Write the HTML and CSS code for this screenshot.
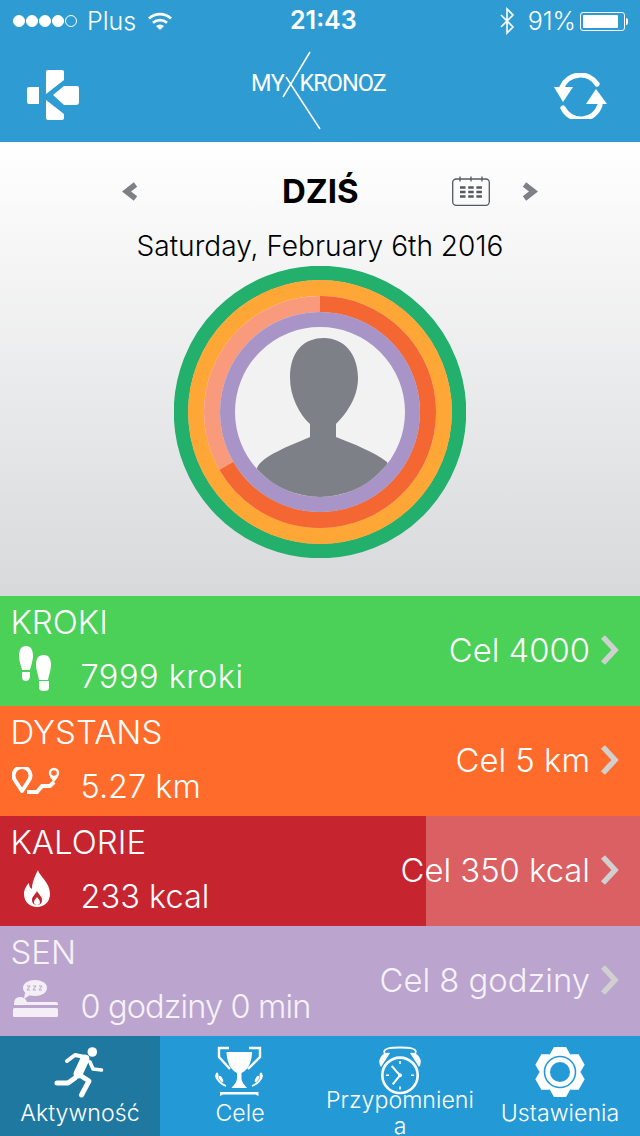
FILE: index.html
```html
<!DOCTYPE html>
<html lang="pl">
<head>
<meta charset="utf-8">
<title>MyKronoz</title>
<link rel="stylesheet" href="styles.css">
</head>
<body>
<div class="app">
  <header class="top">
    <div class="status">
      <div class="status-left">
        <span class="dots"><i class="dot"></i><i class="dot"></i><i class="dot"></i><i class="dot"></i><i class="dot dot-empty"></i></span>
        <span class="carrier">Plus</span>
        <svg class="wifi" viewBox="0 0 24 18"><path d="M1 6.500a16 16 0 0 1 22 0" fill="none" stroke="#fff" stroke-width="2.800"/><path d="M5 10.800a10.500 10.500 0 0 1 14 0" fill="none" stroke="#fff" stroke-width="2.800"/><path d="M8 14a6 6 0 0 1 8 0l-4 4z" fill="#fff"/></svg>
      </div>
      <div class="clock">21:43</div>
      <div class="status-right">
        <svg class="bt" viewBox="0 0 16 28"><path d="M2 8l12 12-6 6V2l6 6L2 20" fill="none" stroke="#fff" stroke-width="1.600"/></svg>
        <span class="pct">91%</span>
        <span class="battery"><span class="battery-body"><span class="battery-fill"></span></span><span class="battery-nub"></span></span>
      </div>
    </div>
    <div class="nav">
      <svg class="kicon" viewBox="0 0 52 50"><path d="M0 19q0-2 2-2h10v17H2q-2 0-2-2z" fill="#fff"/><path d="M19 2q0-2 2-2h14q2 0 2 2v8L19 24z" fill="#fff"/><path d="M26 25l11-9h13q2 0 2 2v14q0 3-3 3H37z" fill="#fff"/><path d="M19 30l18 14v4q0 2-3 2H21q-2 0-2-2z" fill="#fff"/></svg>
      <div class="logo">
        <span class="logo-my">MY</span><span class="logo-kronoz">KRONOZ</span>
        <svg class="logo-x" viewBox="0 0 60 80"><path d="M39 1L12 46M15 26L49 78" fill="none" stroke="#fff" stroke-width="1.500"/></svg>
      </div>
      <svg class="sync" viewBox="0 0 54 46"><path d="M9 14A20 20 0 0 1 44 11" fill="none" stroke="#fff" stroke-width="5.200" stroke-linecap="round"/><path d="M47 32A20 20 0 0 1 10 35" fill="none" stroke="#fff" stroke-width="5.200" stroke-linecap="round"/><path d="M1 14h19L10 29z" fill="#fff"/><path d="M33 31h21L43 16z" fill="#fff"/></svg>
    </div>
  </header>

  <section class="today">
    <div class="day-nav">
      <svg class="chev" viewBox="0 0 16 19"><path d="M13.500 2.500L4.500 9.500 13.500 16.500" fill="none" stroke="#7e8085" stroke-width="5.500"/></svg>
      <h1 class="day-title">DZIŚ</h1>
      <svg class="cal" viewBox="0 0 38 30"><rect x=".7" y="3" width="36.600" height="26.300" rx="3.500" fill="none" stroke="#55585e" stroke-width="1.300"/><path d="M8 .5v5M19 .5v5M30 .5v5" stroke="#55585e" stroke-width="1.300"/><path d="M8 11.500h22M8 16h22M8 20.500h22" stroke="#55585e" stroke-width="2.600" stroke-dasharray="5.500 2.700"/></svg>
      <svg class="chev" viewBox="0 0 16 19"><path d="M2.500 2.500l9 7-9 7" fill="none" stroke="#7e8085" stroke-width="5.500"/></svg>
    </div>
    <p class="date">Saturday, February 6th 2016</p>
    <svg class="rings" viewBox="0 0 292 292">
      <defs><clipPath id="face"><circle cx="146" cy="146" r="85"/></clipPath></defs>
      <circle cx="146" cy="146" r="139" fill="none" stroke="#23af6c" stroke-width="14.500"/>
      <circle cx="146" cy="146" r="124" fill="none" stroke="#ffa736" stroke-width="16"/>
      <circle cx="146" cy="146" r="108" fill="none" stroke="#f99a7c" stroke-width="16"/>
      <circle cx="146" cy="146" r="108" fill="none" stroke="#f46632" stroke-width="16" pathLength="360" stroke-dasharray="240 120" transform="rotate(-90 146 146)"/>
      <circle cx="146" cy="146" r="92.500" fill="#f2f2f3" stroke="#a894c6" stroke-width="15"/>
      <g clip-path="url(#face)">
        <path d="M150 72C170 72 184 88 184 112 184 132 172 148 162 158V171C180 178 200 186 213 196L240 260H60L83 202C88 190 115 180 136 171V158C125 148 116 130 116 112 116 85 130 72 150 72Z" fill="#7e8087"/>
      </g>
    </svg>
  </section>

  <section class="stats">
    <div class="stat stat-steps">
      <div class="stat-fill" style="width:100%"></div>
      <div class="stat-main">
        <div class="stat-name">KROKI</div>
        <div class="stat-value">
          <svg class="stat-icon" viewBox="0 0 32 46"><g fill="#fff"><path d="M7 0c5 0 7 4 7 10 0 5-2 9-3 14H3C2 19 0 15 0 10 0 4 2 0 7 0z"/><path d="M3 26h8v5q-1 4-4 4-4 0-4-4z"/><path d="M25 9c-6 0-8 4-8 10 0 5 2 9 3 15h9c1-6 3-10 3-15 0-6-2-10-7-10z"/><path d="M20 35h10v7q0 3-5 3t-5-3z"/></g></svg>
          <span>7999 kroki</span>
        </div>
      </div>
      <div class="stat-goal"><span>Cel 4000</span><svg class="arrow" viewBox="0 0 20 32"><path d="M3 3l12 13L3 29" fill="none" stroke="currentColor" stroke-width="5.500"/></svg></div>
    </div>
    <div class="stat stat-distance">
      <div class="stat-fill" style="width:100%"></div>
      <div class="stat-main">
        <div class="stat-name">DYSTANS</div>
        <div class="stat-value">
          <svg class="stat-icon" viewBox="0 0 48 28"><g fill="none" stroke="#fff"><path d="M10 24L3.500 14a8.500 8.500 0 1 1 13 0z" stroke-width="4" stroke-linejoin="round"/><path d="M15 25h10l5-6h8l4-4" stroke-width="4"/><circle cx="42" cy="6" r="4" stroke-width="2.400"/><path d="M42 15l-4-5h8z" fill="#fff" stroke="none"/></g></svg>
          <span>5.27 km</span>
        </div>
      </div>
      <div class="stat-goal"><span>Cel 5 km</span><svg class="arrow" viewBox="0 0 20 32"><path d="M3 3l12 13L3 29" fill="none" stroke="currentColor" stroke-width="5.500"/></svg></div>
    </div>
    <div class="stat stat-calories">
      <div class="stat-fill" style="width:66.6%"></div>
      <div class="stat-main">
        <div class="stat-name">KALORIE</div>
        <div class="stat-value">
          <svg class="stat-icon" viewBox="0 0 28 38"><path fill-rule="evenodd" d="M15 0c1 6 12 12 12 24 0 8-6 13-13 13S1 32 1 24c0-5 3-9 5-11 0 3 1 5 3 6 0-7 3-13 6-19zM14 21c-1 3-5 5-5 9 0 3 2 5 5 5s5-2 5-5c0-4-4-6-5-9z" fill="#fff"/><path d="M14 27c-1 2-3 3-3 5s1 3 3 3 3-1 3-3-2-3-3-5z" fill="#fff"/></svg>
          <span>233 kcal</span>
        </div>
      </div>
      <div class="stat-goal"><span>Cel 350 kcal</span><svg class="arrow" viewBox="0 0 20 32"><path d="M3 3l12 13L3 29" fill="none" stroke="currentColor" stroke-width="5.500"/></svg></div>
    </div>
    <div class="stat stat-sleep">
      <div class="stat-fill" style="width:0%"></div>
      <div class="stat-main">
        <div class="stat-name">SEN</div>
        <div class="stat-value">
          <svg class="stat-icon" viewBox="0 0 46 38"><ellipse cx="23" cy="8" rx="12" ry="8" fill="#f4eff7"/><path d="M13 13l-1 6 6-4z" fill="#f4eff7"/><path d="M2 24q0-7 6-7 5 0 7 5h29q2 0 2 2v1H2z" fill="#f4eff7"/><rect x="1" y="28" width="45" height="9" rx="1.500" fill="#f4eff7"/><path d="M15 6h3l-3 4h3M21 6h3l-3 4h3M27 6h3l-3 4h3" fill="none" stroke="#bba5cf" stroke-width="1"/></svg>
          <span>0 godziny 0 min</span>
        </div>
      </div>
      <div class="stat-goal"><span>Cel 8 godziny</span><svg class="arrow" viewBox="0 0 20 32"><path d="M3 3l12 13L3 29" fill="none" stroke="currentColor" stroke-width="5.500"/></svg></div>
    </div>
  </section>

  <nav class="tabs">
    <div class="tab tab-active">
      <div class="tab-icon">
        <svg viewBox="0 0 56 56" class="tab-svg"><circle cx="40.300" cy="12" r="4.800" fill="#fff"/><g fill="none" stroke="#fff" stroke-linecap="round" stroke-linejoin="round"><path d="M15 21l8-6 12 2.500" stroke-width="4"/><path d="M33 19L26 34" stroke-width="9"/><path d="M38 22l3 7 8.500 1" stroke-width="3.600"/><path d="M26 34l11 7-7.500 14" stroke-width="5"/><path d="M23 38l-7 5H5" stroke-width="5"/></g></svg>
      </div>
      <div class="tab-label">Aktywność</div>
    </div>
    <div class="tab">
      <div class="tab-icon">
        <svg viewBox="0 0 56 56" class="tab-svg"><g fill="none" stroke="#fff" stroke-width="2.400"><path d="M17 8H7v9l11 12"/><path d="M37 8h11v9L36 29"/></g><path d="M14.500 12H40c0 8-3 18-10.500 21v5c0 4 3 7 5.500 10H19.500c2.500-3 5.500-6 5.500-10v-5C18 30 14.500 20 14.500 12z" fill="#fff"/><g fill="none" stroke="#fff" stroke-width="1.800"><path d="M4 35c1 5 5 9 10 11"/><path d="M50 35c-1 5-5 9-10 11"/></g><g fill="#fff"><ellipse cx="5" cy="36" rx="1.500" ry="3.500"/><ellipse cx="9" cy="39" rx="1.500" ry="3.500" transform="rotate(-30 9 39)"/><ellipse cx="49" cy="36" rx="1.500" ry="3.500"/><ellipse cx="45" cy="39" rx="1.500" ry="3.500" transform="rotate(30 45 39)"/></g><path d="M8 52h38.500v4l-3-1.500H11L8 56z" fill="#fff"/></svg>
      </div>
      <div class="tab-label">Cele</div>
    </div>
    <div class="tab">
      <div class="tab-icon">
        <svg viewBox="0 0 56 56" class="tab-svg"><circle cx="28" cy="35.300" r="17.700" fill="none" stroke="#fff" stroke-width="2.600"/><path d="M9 27a9 9 0 0 1 9-14zM47 27a9 9 0 0 0-9-14z" fill="#fff"/><path d="M13 14C9 8 20 7.500 28 7.500S47 8 43 14" fill="none" stroke="#fff" stroke-width="1.800"/><path d="M28 35.300L19.700 26M28 35.300l-7.300 9" fill="none" stroke="#fff" stroke-width="2"/><path d="M28 21v3M28 46.500v3M14 35.300h3M39 35.300h3" stroke="#fff" stroke-width="1.600"/><circle cx="28" cy="35.300" r="2" fill="#fff"/></svg>
      </div>
      <div class="tab-label">Przypomnienia</div>
    </div>
    <div class="tab">
      <div class="tab-icon">
        <svg viewBox="0 0 56 56" class="tab-svg"><circle cx="28" cy="32" r="20.500" fill="#fff"/><g fill="#fff"><path d="M18 14l4-7h12l4 7z"/><path d="M18 14l4-7h12l4 7z" transform="rotate(60 28 32)"/><path d="M18 14l4-7h12l4 7z" transform="rotate(120 28 32)"/><path d="M18 14l4-7h12l4 7z" transform="rotate(180 28 32)"/><path d="M18 14l4-7h12l4 7z" transform="rotate(240 28 32)"/><path d="M18 14l4-7h12l4 7z" transform="rotate(300 28 32)"/></g><circle cx="28" cy="32" r="15.500" fill="none" stroke="#2399d5" stroke-width="1.600"/><circle cx="28" cy="32" r="10" fill="#2399d5"/></svg>
      </div>
      <div class="tab-label">Ustawienia</div>
    </div>
  </nav>
</div>
</body>
</html>
```
FILE: styles.css
```css
* { box-sizing: border-box; }
html, body { margin: 0; padding: 0; }
body { width: 640px; height: 1136px; overflow: hidden; font-family: Inter, "Liberation Sans", sans-serif; color: #fff; }
.app { width: 640px; height: 1136px; display: flex; flex-direction: column; overflow: hidden; }

.top { height: 142px; background: #2e9cd3; display: flex; flex-direction: column; }
.status { height: 40px; padding: 2px 12px 0 13px; display: flex; align-items: center; justify-content: space-between; font-size: 25px; position: relative; }
.status-left, .status-right { display: flex; align-items: center; }
.dots { display: flex; gap: 1px; }
.dot { width: 12px; height: 12px; border-radius: 50%; background: #fff; border: 1px solid #fff; display: block; }
.dot-empty { background: transparent; }
.carrier { margin-left: 10px; font-weight: 300; }
.wifi { width: 24px; height: 18px; margin-left: 12px; }
.clock { font-weight: 600; position: absolute; left: 290px; top: 5px; }
.bt { width: 16px; height: 28px; }
.pct { margin-left: 13px; font-weight: 300; }
.battery { display: flex; align-items: center; margin-left: 4px; }
.battery-body { width: 45px; height: 19px; border: 1px solid #fff; border-radius: 3px; padding: 2px; display: block; }
.battery-fill { display: block; height: 100%; width: 91%; background: #fff; border-radius: 1px; }
.battery-nub { width: 2px; height: 7px; background: #fff; margin-left: 1px; border-radius: 0 2px 2px 0; }

.nav { flex: 1; padding: 0 33px 0 27px; display: flex; align-items: center; justify-content: space-between; position: relative; }
.kicon { width: 52px; height: 50px; margin-top: 7px; }
.logo { position: absolute; left: 251px; top: 31px; font-family: Roboto, sans-serif; font-weight: 400; font-size: 23.5px; line-height: 24px; display: flex; gap: 15px; letter-spacing: -0.4px; }
.logo-kronoz { letter-spacing: -1px; }
.logo-x { position: absolute; left: 20px; top: -20px; width: 60px; height: 80px; }
.sync { width: 54px; height: 46px; margin-top: 9px; }

.today { height: 454px; background: linear-gradient(#ffffff, #d8d9db); display: flex; flex-direction: column; align-items: center; }
.day-nav { width: 416px; height: 48px; margin: 25px 0 0 20px; display: flex; align-items: center; position: relative; color: #000; }
.chev { width: 16px; height: 19px; }
.day-title { margin: 0; font-size: 33px; font-weight: 700; position: absolute; left: 160px; top: 0; line-height: 48px; }
.cal { width: 38px; height: 30px; margin-left: auto; margin-right: 32px; }
.date { margin: 13px 0 0; font-size: 28.1px; line-height: 36px; color: #000; font-weight: 350; }
.rings { width: 292px; height: 292px; margin-top: 2px; display: block; }

.stats { display: flex; flex-direction: column; }
.stat { height: 110px; position: relative; display: flex; justify-content: space-between; font-weight: 350; }
.stat-fill { position: absolute; left: 0; top: 0; bottom: 0; }
.stat-steps { background: #4bd058; } .stat-steps .stat-fill { background: #4bd058; }
.stat-distance { background: #ff6b2b; } .stat-distance .stat-fill { background: #ff6b2b; }
.stat-calories { background: #da6063; } .stat-calories .stat-fill { background: #c6242f; }
.stat-sleep { background: #bba5cf; color: #f6f2f9; }
.stat-main { position: relative; padding-left: 10.5px; }
.stat-name { font-size: 33px; line-height: 40px; margin-top: 6px; }
.stat-value { font-size: 32.5px; line-height: 44px; margin-top: 13px; display: flex; align-items: center; }
.stat-icon { flex: none; margin-top: -16px; }
.stat-steps .stat-value { letter-spacing: 0.5px; }
.stat-sleep .stat-value { letter-spacing: -0.87px; }
.stat-steps .stat-icon { width: 32px; height: 46px; margin-left: 8px; margin-right: 30px; }
.stat-distance .stat-icon { width: 48px; height: 28px; margin-top: -13px; margin-left: 1px; margin-right: 21px; }
.stat-calories .stat-icon { width: 28px; height: 38px; margin-left: 12px; margin-right: 30px; }
.stat-sleep .stat-icon { width: 46px; height: 38px; margin-left: 1px; margin-right: 23px; }
.stat-goal { position: relative; display: flex; align-items: center; font-size: 32.8px; padding: 0 20px 2px 0; }
.arrow { width: 20px; height: 32px; margin-left: 10px; color: #d0d0d0; margin-top: -1px; }

.tabs { height: 100px; display: flex; background: #2399d5; }
.tab { width: 160px; display: flex; flex-direction: column; align-items: center; }
.tab-active { background: #1f78a0; }
.tab-icon { height: 54px; flex: none; display: flex; justify-content: center; padding-top: 4px; }
.tab-svg { width: 56px; height: 56px; overflow: visible; }
.tab-label { height: 46px; width: 150px; display: flex; align-items: center; justify-content: center; text-align: center; font-size: 23.2px; line-height: 26px; font-weight: 350; overflow-wrap: anywhere; }
```
